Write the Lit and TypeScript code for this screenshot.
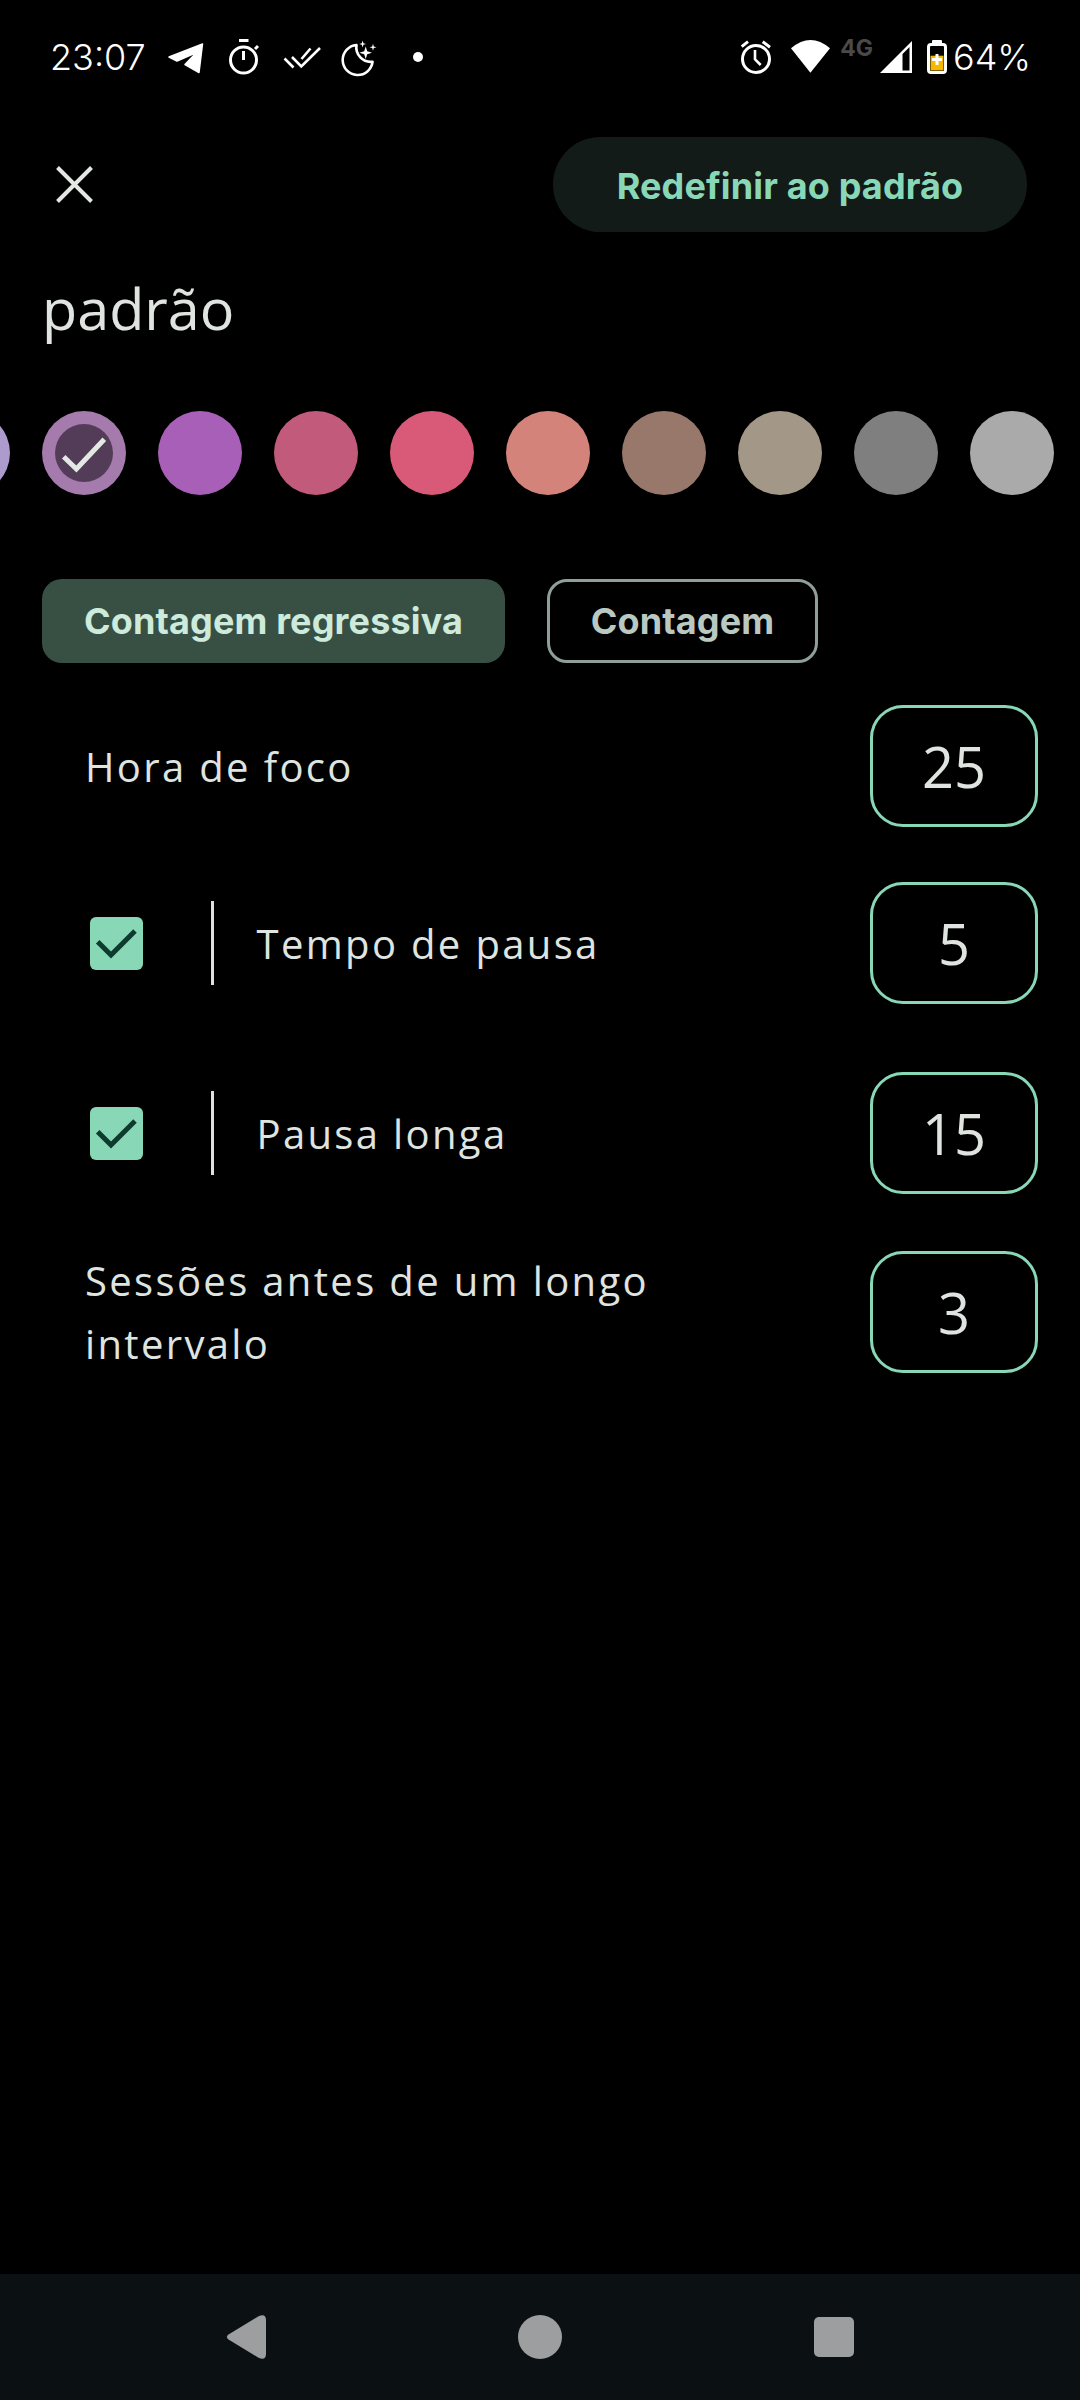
import { LitElement, html, css, svg } from 'lit';
import { customElement } from 'lit/decorators.js';

const SWATCHES = ['#ae9bce', '#a57aad', '#a85fb8', '#c25a7c', '#d85a78', '#d4837a', '#97786b', '#a39788', '#7f7f7f', '#aaaaaa'];

const ROWS = [
  { label: 'Hora de foco', value: '25', toggle: false },
  { label: 'Tempo de pausa', value: '5', toggle: true },
  { label: 'Pausa longa', value: '15', toggle: true },
  { label: 'Sessões antes de um longo intervalo', value: '3', toggle: false },
];

// status bar icons, drawn in 58x58 slots
const ICONS = {
  telegram: svg`<path fill="#fff" stroke="#fff" stroke-width="1.5" stroke-linejoin="round" d="M12 29 L45.5 16 L42 44.5 L28 36.5 L39.5 24.5 L20 33 Z"/>`,
  timer: svg`<g fill="none" stroke="#fff" stroke-width="3"><circle cx="28.5" cy="32" r="13"/><path d="M24 12.5H33.5M28.5 23V32M40 21L43 18"/></g>`,
  checks: svg`<path fill="none" stroke="#fff" stroke-width="2.6" d="M11.5 30.5L20.5 39.5M19 29L28.3 38.5L47 20M28.5 31L37.5 20.5"/>`,
  moon: svg`<path fill="none" stroke="#fff" stroke-width="2.6" stroke-linejoin="round" d="M25.5 17A15 15 0 1 0 41.6 33.7A14.5 14.5 0 0 1 25.5 17Z"/>
    <path fill="#fff" d="M34.7 18.5L36.2 23.2L41 24.7L36.2 26.2L34.7 31L33.2 26.2L28.4 24.7L33.2 23.2Z M31.6 12.5L32.4 15.2L35 16L32.4 16.8L31.6 19.5L30.8 16.8L28.2 16L30.8 15.2Z M42 15.8L42.8 18.5L45.5 19.3L42.8 20.1L42 22.8L41.2 20.1L38.5 19.3L41.2 18.5Z"/>`,
  dot: svg`<circle cx="29" cy="29" r="5" fill="#fff"/>`,
  alarm: svg`<g fill="none" stroke="#fff" stroke-width="3"><circle cx="27" cy="31" r="13.5"/><path d="M12.7 18.7L19 13.7M33.7 13.7L41 19.3"/><path stroke-width="2.6" d="M26 22V31.3L31.7 37"/></g>`,
  wifi: svg`<path fill="#fff" d="M8 20.3Q27.5 3.7 47 20.3L27.4 44.7Z"/>`,
};

@customElement('app-root')
export class AppRoot extends LitElement {
  static styles = css`
    :host {
      display: flex;
      flex-direction: column;
      height: 2400px;
      background: #000;
      color: #dfe4e0;
      font-family: "Open Sans", sans-serif;
      overflow: hidden;
    }

    .status {
      display: flex;
      align-items: center;
      justify-content: space-between;
      height: 114px;
      padding: 0 49px 0 50px;
      box-sizing: border-box;
      color: #fff;
      font-family: Inter, sans-serif;
      font-size: 36px;
      font-weight: 300;
      flex: none;
    }

    .status-left,
    .status-right {
      display: flex;
      align-items: center;
    }

    .time {
      width: 107px;
    }

    .slot {
      display: block;
      flex: none;
    }

    .net {
      margin: 0 7px 18px 3px;
      color: #4a4a4a;
      font-size: 23px;
      font-weight: 700;
      line-height: 1;
    }

    .battery {
      margin: 0 6px 0 15px;
    }

    .header {
      display: flex;
      align-items: center;
      justify-content: space-between;
      height: 95px;
      margin-top: 23px;
      padding: 0 53px 0 56px;
      flex: none;
    }

    .reset {
      width: 474px;
      height: 95px;
      box-sizing: border-box;
      padding-top: 2px;
      display: flex;
      align-items: center;
      justify-content: center;
      border-radius: 48px;
      background: #131b19;
      color: #88d8b8;
    }

    .reset,
    .chip {
      font-family: Inter, sans-serif;
      font-size: 36px;
      font-weight: 700;
      letter-spacing: 0.15px;
    }

    .title {
      margin: 38px 0 0 42px;
      font-size: 57.5px;
      line-height: 76px;
      flex: none;
    }

    .swatches {
      display: flex;
      gap: 32px;
      margin: 65px 0 0 -74px;
      flex: none;
    }

    .swatch {
      width: 84px;
      height: 84px;
      border-radius: 50%;
      flex: none;
      display: flex;
      align-items: center;
      justify-content: center;
    }

    .swatch-inner {
      width: 58px;
      height: 58px;
      border-radius: 50%;
      background: #523c58;
    }

    .chips {
      display: flex;
      gap: 42px;
      margin: 84px 0 0 42px;
      flex: none;
    }

    .chip {
      height: 84px;
      box-sizing: border-box;
      display: flex;
      align-items: center;
      justify-content: center;
      border-radius: 20px;
    }

    .chip.on {
      width: 463px;
      background: #384f44;
      color: #cdeadb;
    }

    .chip.off {
      width: 271px;
      border: 3px solid #8f9e98;
      color: #bac8c2;
    }

    .rows {
      display: flex;
      flex-direction: column;
      margin-top: 42px;
      padding: 0 42px 0 85px;
    }

    .row {
      display: flex;
      align-items: center;
      justify-content: space-between;
      min-height: 122px;
    }

    .row:nth-child(2) {
      margin-top: 55px;
    }

    .row:nth-child(3) {
      margin-top: 68px;
    }

    .row:nth-child(4) {
      margin-top: 55px;
    }

    .row-main {
      display: flex;
      align-items: center;
    }

    .check {
      width: 53px;
      height: 53px;
      margin-left: 5px;
      border-radius: 6px;
      background: #88d8b8;
      flex: none;
    }

    .divider {
      width: 2.5px;
      height: 84px;
      margin: 0 43px 0 68px;
      background: #dde2de;
      flex: none;
    }

    .label {
      max-width: 600px;
      font-size: 40px;
      line-height: 63px;
      letter-spacing: 2.35px;
    }

    .value {
      width: 168px;
      height: 122px;
      box-sizing: border-box;
      display: flex;
      align-items: center;
      justify-content: center;
      border: 3px solid #88d8b8;
      border-radius: 33px;
      font-size: 56px;
      flex: none;
    }

    .nav {
      display: flex;
      align-items: center;
      gap: 252px;
      height: 126px;
      margin-top: auto;
      padding-left: 226px;
      background: #0b1013;
      flex: none;
    }

    .nav-home {
      width: 44px;
      height: 44px;
      border-radius: 50%;
      background: #9d9ea0;
    }

    .nav-recent {
      width: 40px;
      height: 40px;
      border-radius: 5px;
      background: #9d9ea0;
    }
  `;

  private slot(icon: unknown, width = 58) {
    return html`<svg class="slot" width=${width} height="58" viewBox="0 0 ${width} 58">${icon}</svg>`;
  }

  private statusBar() {
    return html`
      <div class="status">
        <div class="status-left">
          <span class="time">23:07</span>
          ${this.slot(ICONS.telegram)}
          ${this.slot(ICONS.timer)}
          ${this.slot(ICONS.checks)}
          ${this.slot(ICONS.moon)}
          ${this.slot(ICONS.dot)}
        </div>
        <div class="status-right">
          ${this.slot(ICONS.alarm, 54)}
          ${this.slot(ICONS.wifi, 54)}
          <span class="net">4G</span>
          <svg class="slot" width="32" height="32" viewBox="0 0 32 32">
            <path fill="#fff" fill-rule="evenodd" d="M0 32L32 0V32ZM22.5 13L29.5 6V29.5H22.5Z"/>
          </svg>
          <svg class="slot battery" width="20" height="34" viewBox="0 0 20 34">
            <rect x="5" y="0" width="10" height="5" rx="1" fill="#fff"/>
            <rect x="1.5" y="4.5" width="17" height="28" rx="2.5" fill="none" stroke="#fff" stroke-width="3"/>
            <rect x="3.5" y="15.7" width="13" height="14.8" fill="#f9b800"/>
            <path fill="#fff" d="M8.5 14H11.5V18H15V21H11.5V25H8.5V21H5V18H8.5Z"/>
          </svg>
          <span>64%</span>
        </div>
      </div>
    `;
  }

  private renderRow(row: { label: string; value: string; toggle: boolean }) {
    return html`
      <div class="row">
        <div class="row-main">
          ${row.toggle
            ? html`
                <svg class="check" viewBox="0 0 53 53">
                  <path fill="none" stroke="#0e3b2d" stroke-width="5" d="M7.7 24.7L21 38L45 14"/>
                </svg>
                <div class="divider"></div>
              `
            : ''}
          <div class="label">${row.label}</div>
        </div>
        <div class="value">${row.value}</div>
      </div>
    `;
  }

  render() {
    return html`
      ${this.statusBar()}
      <div class="header">
        <svg width="37" height="37" viewBox="0 0 37 37">
          <path fill="none" stroke="#e3e8e4" stroke-width="4" d="M1.5 1.5L35.5 35.5M35.5 1.5L1.5 35.5"/>
        </svg>
        <div class="reset">Redefinir ao padrão</div>
      </div>
      <div class="title">padrão</div>
      <div class="swatches">
        ${SWATCHES.map(
          (color, i) => html`
            <div class="swatch" style="background:${color}">
              ${i === 1
                ? html`<div class="swatch-inner">
                    <svg width="58" height="58" viewBox="13 13 58 58">
                      <path fill="none" stroke="#e3e8e4" stroke-width="5" d="M21.7 45.7L34.4 58L62.3 28.3"/>
                    </svg>
                  </div>`
                : ''}
            </div>
          `
        )}
      </div>
      <div class="chips">
        <div class="chip on">Contagem regressiva</div>
        <div class="chip off">Contagem</div>
      </div>
      <div class="rows">${ROWS.map(row => this.renderRow(row))}</div>
      <div class="nav">
        <svg width="40" height="44" viewBox="0 0 40 44">
          <path fill="#9d9ea0" d="M2.5 19.5L33 1Q40 -1.5 40 5V39Q40 45.5 33 43L2.5 24.5Q-0.8 22 2.5 19.5Z"/>
        </svg>
        <div class="nav-home"></div>
        <div class="nav-recent"></div>
      </div>
    `;
  }
}

declare global {
  interface HTMLElementTagNameMap {
    'app-root': AppRoot;
  }
}
